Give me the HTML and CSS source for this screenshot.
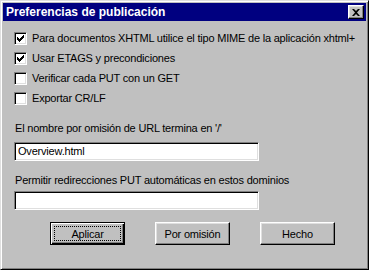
FILE: index.html
```html
<!DOCTYPE html>
<html lang="es">
<head>
<meta charset="utf-8">
<title>Preferencias de publicación</title>
<link rel="stylesheet" href="styles.css">
</head>
<body>
<div class="window">
  <div class="titlebar">
    <span class="title">Preferencias de publicación</span>
    <span class="close">
      <svg width="8" height="7" viewBox="0 0 8 7"><path d="M0 0h2l2 2 2-2h2L5 3.5 8 7H6L4 5 2 7H0l3-3.5z" fill="#000"/></svg>
    </span>
  </div>
  <div class="content">
    <div class="checks">
      <div class="check"><span class="box checked"><svg width="7" height="7" viewBox="0 0 7 7"><path d="M0 2h1v1h1v1h1V3h1V2h1V1h1V0h1v3H6v1H5v1H4v1H3v1H2V6H1V5H0z" fill="#000"/></svg></span><span class="label">Para documentos XHTML utilice el tipo MIME de la aplicación xhtml+</span></div>
      <div class="check"><span class="box checked"><svg width="7" height="7" viewBox="0 0 7 7"><path d="M0 2h1v1h1v1h1V3h1V2h1V1h1V0h1v3H6v1H5v1H4v1H3v1H2V6H1V5H0z" fill="#000"/></svg></span><span class="label">Usar ETAGS y precondiciones</span></div>
      <div class="check"><span class="box"></span><span class="label">Verificar cada PUT con un GET</span></div>
      <div class="check"><span class="box"></span><span class="label">Exportar CR/LF</span></div>
    </div>
    <div class="field first">
      <div class="flabel">El nombre por omisión de URL termina en '/'</div>
      <div class="input">Overview.html</div>
    </div>
    <div class="field second">
      <div class="flabel">Permitir redirecciones PUT automáticas en estos dominios</div>
      <div class="input"></div>
    </div>
    <div class="buttons">
      <div class="btn default"><span class="focus">Aplicar</span></div>
      <div class="btn"><span class="focus">Por omisión</span></div>
      <div class="btn"><span class="focus">Hecho</span></div>
    </div>
  </div>
</div>
</body>
</html>
```
FILE: styles.css
```css
html, body {
  margin: 0;
  padding: 0;
  background: #c0c0c0;
}
body {
  font-family: "Liberation Sans", Arial, sans-serif;
  font-size: 11px;
  letter-spacing: -0.2px;
  color: #000;
}
.window {
  width: 369px;
  height: 270px;
  box-sizing: border-box;
  background: #c0c0c0;
  border: 1px solid;
  border-color: #dfdfdf #000 #000 #dfdfdf;
  box-shadow: inset 1px 1px #fff, inset -1px -1px #808080;
  padding: 2px;
  display: flex;
  flex-direction: column;
}
.titlebar {
  height: 18px;
  background: #000080;
  color: #fff;
  display: flex;
  align-items: flex-start;
  justify-content: space-between;
  padding: 0 2px 0 3px;
}
.title {
  font-weight: bold;
  font-size: 12px;
  letter-spacing: 0;
  line-height: 18px;
}
.close {
  margin-top: 2px;
  width: 16px;
  height: 14px;
  box-sizing: border-box;
  background: #c0c0c0;
  border: 1px solid;
  border-color: #fff #000 #000 #fff;
  box-shadow: inset -1px -1px #808080, inset 1px 1px #dfdfdf;
  display: flex;
  align-items: center;
  justify-content: center;
}
.content {
  padding: 11px 0 0 11px;
  display: flex;
  flex-direction: column;
}
.checks {
  display: flex;
  flex-direction: column;
  gap: 7px;
}
.check {
  display: flex;
  align-items: center;
  height: 13px;
  white-space: nowrap;
}
.box {
  width: 13px;
  height: 13px;
  box-sizing: border-box;
  background: #fff;
  border: 1px solid;
  border-color: #808080 #fff #fff #808080;
  box-shadow: inset 1px 1px #000, inset -1px -1px #dfdfdf;
  display: flex;
  align-items: center;
  justify-content: center;
  flex: none;
}
.label {
  margin-left: 5px;
  line-height: 13px;
}
.field {
  display: flex;
  flex-direction: column;
}
.field.first {
  margin-top: 17px;
}
.field.second {
  margin-top: 13px;
}
.flabel {
  line-height: 13px;
  margin-left: 1px;
  white-space: nowrap;
}
.input {
  width: 245px;
  height: 19px;
  box-sizing: border-box;
  background: #fff;
  border: 1px solid;
  border-color: #808080 #fff #fff #808080;
  box-shadow: inset 1px 1px #000, inset -1px -1px #dfdfdf;
  padding: 0 3px;
  line-height: 17px;
}
.first .input {
  margin-top: 7px;
}
.second .input {
  margin-top: 4px;
}
.buttons {
  margin-top: 12px;
  margin-left: 36px;
  display: flex;
  gap: 30px;
}
.btn {
  width: 75px;
  height: 23px;
  box-sizing: border-box;
  background: #c0c0c0;
  border: 1px solid;
  border-color: #fff #000 #000 #fff;
  box-shadow: inset -1px -1px #808080, inset 1px 1px #dfdfdf;
  display: flex;
  align-items: center;
  justify-content: center;
}
.btn.default {
  border: 1px solid #000;
  box-shadow: inset 1px 1px #fff, inset -1px -1px #000, inset -2px -2px #808080;
  padding: 3px;
}
.focus {
  flex: 1;
  align-self: stretch;
  display: flex;
  align-items: center;
  justify-content: center;
}
.btn.default .focus {
  border: 1px dotted #000;
}
```
